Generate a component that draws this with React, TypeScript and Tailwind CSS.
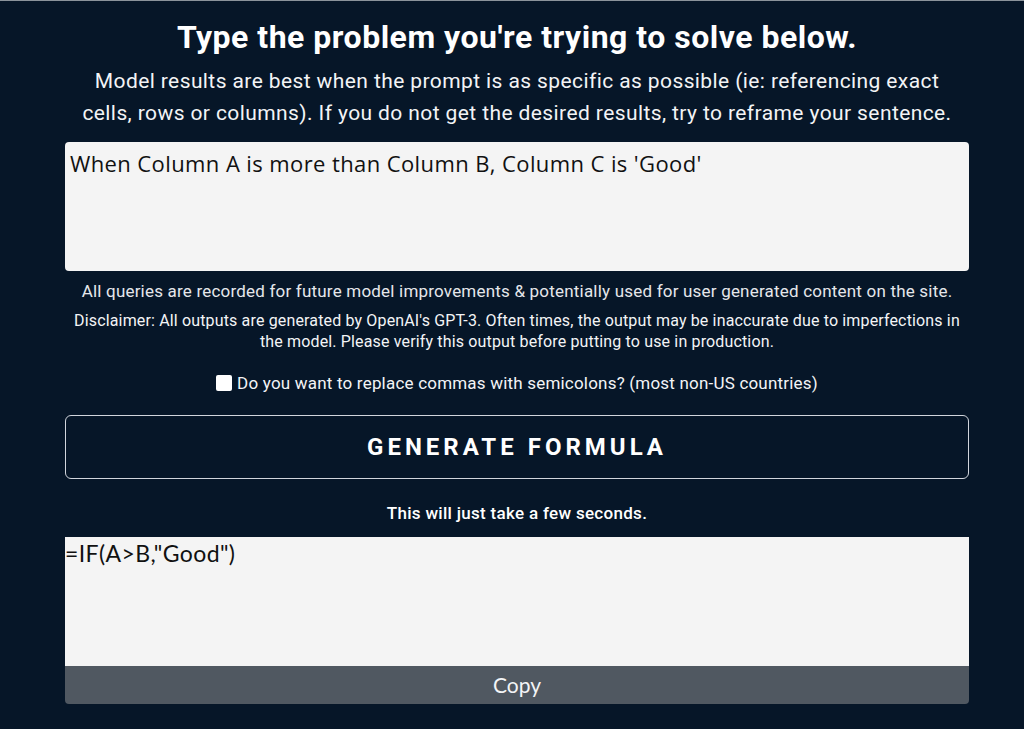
import { useState } from "react";

export default function App() {
    const [query, setQuery] = useState("When Column A is more than Column B, Column C is 'Good'");
    const [semi, setSemi] = useState(false);

    return (
        <div className="min-h-[729px] bg-[#061628] border-t border-[#8b939b] text-white font-['Roboto',sans-serif] flex justify-center pl-[10px]">
            <div className="w-[904px] flex flex-col items-center pt-[16px]">
                <h1 className="text-[32px] leading-[40px] font-bold tracking-[0.5px] whitespace-nowrap">
                    Type the problem you're trying to solve below.
                </h1>
                <p className="mt-[8px] text-[21px] leading-[32px] text-center text-gray-100 tracking-[0.4px] whitespace-nowrap">
                    Model results are best when the prompt is as specific as possible (ie: referencing exact
                    <br />
                    cells, rows or columns). If you do not get the desired results, try to reframe your sentence.
                </p>

                <textarea
                    value={query}
                    onChange={(e) => setQuery(e.target.value)}
                    className="mt-[13px] w-full h-[129px] resize-none rounded-[4px] bg-[#f4f4f4] text-[#111] px-[5px] py-[7px] text-[22px] leading-[28px] tracking-[0.4px] font-['Open_Sans',sans-serif] outline-none"
                />

                <p className="mt-[9px] text-[17px] leading-[22px] text-gray-200 tracking-[0.2px] whitespace-nowrap">
                    All queries are recorded for future model improvements &amp; potentially used for user generated content on the site.
                </p>
                <p className="mt-[8px] text-[16px] leading-[21px] text-center text-gray-100 tracking-[0.15px] whitespace-nowrap">
                    Disclaimer: All outputs are generated by OpenAI's GPT-3. Often times, the output may be inaccurate due to imperfections in
                    <br />
                    the model. Please verify this output before putting to use in production.
                </p>

                <label className="mt-[19px] flex items-center gap-[5px] text-[17px] leading-[24px] text-gray-100 tracking-[0.2px]">
                    <input
                        type="checkbox"
                        checked={semi}
                        onChange={(e) => setSemi(e.target.checked)}
                        className="w-[16px] h-[16px] appearance-none rounded-[2px] bg-white checked:bg-blue-500"
                    />
                    Do you want to replace commas with semicolons? (most non-US countries)
                </label>

                <button className="mt-[20px] w-full h-[64px] rounded-[6px] border border-gray-300 text-[24px] font-bold tracking-[4px]">
                    GENERATE FORMULA
                </button>

                <p className="mt-[23px] text-[17px] leading-[22px] font-medium tracking-[0.3px]">This will just take a few seconds.</p>

                <div className="mt-[13px] w-full">
                    <textarea
                        readOnly
                        value={'=IF(A>B,"Good")'}
                        className="block w-full h-[129px] resize-none bg-[#f4f4f4] text-[#111] px-0 py-[2px] text-[23px] leading-[28px] tracking-[0.4px] font-['Lato',sans-serif] outline-none"
                    />
                    <button className="block w-full h-[38px] rounded-b-[4px] bg-[#505861] text-[21px] text-gray-100 font-['Lato',sans-serif]">
                        Copy
                    </button>
                </div>
            </div>
        </div>
    );
}
